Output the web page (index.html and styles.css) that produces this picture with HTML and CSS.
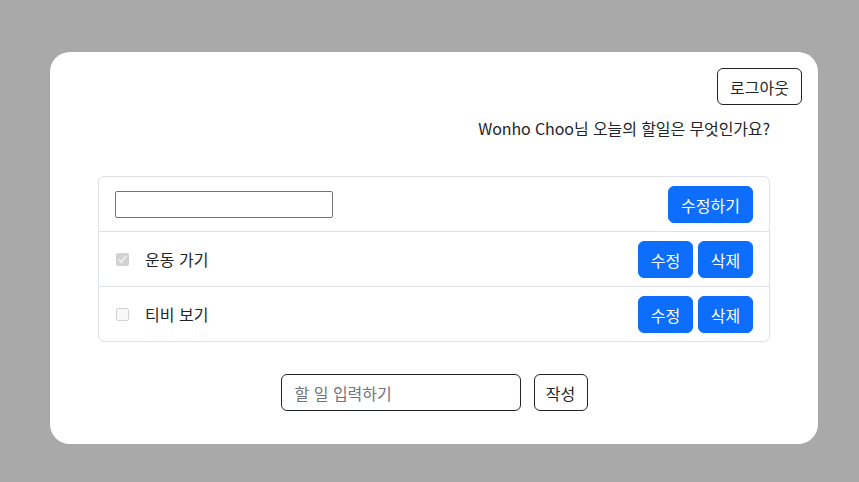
FILE: index.html
```html
<!DOCTYPE html>
<html lang="ko">
<head>
<meta charset="utf-8">
<link rel="stylesheet" href="styles.css">
</head>
<body>
<div class="card">
  <div class="top">
    <button class="btn btn-outline">로그아웃</button>
  </div>
  <div class="content">
    <p class="greeting">Wonho Choo님 오늘의 할일은 무엇인가요?</p>
    <ul class="list">
      <li class="item">
        <input class="edit-input" type="text">
        <button class="btn btn-primary">수정하기</button>
      </li>
      <li class="item">
        <label class="todo"><input type="checkbox" checked disabled><span>운동 가기</span></label>
        <div class="actions">
          <button class="btn btn-primary">수정</button>
          <button class="btn btn-primary">삭제</button>
        </div>
      </li>
      <li class="item">
        <label class="todo"><input type="checkbox" disabled><span>티비 보기</span></label>
        <div class="actions">
          <button class="btn btn-primary">수정</button>
          <button class="btn btn-primary">삭제</button>
        </div>
      </li>
    </ul>
    <form class="add-form">
      <input class="add-input" type="text" placeholder="할 일 입력하기">
      <button type="button" class="btn btn-outline btn-write">작성</button>
    </form>
  </div>
</div>
</body>
</html>
```
FILE: styles.css
```css
* { box-sizing: border-box; }
html, body { margin: 0; padding: 0; }
body {
  background: #a9a9a9;
  font-family: "Noto Sans CJK KR", "Noto Sans", sans-serif;
  font-size: 16px;
  color: #212529;
  height: 482px;
  overflow: hidden;
  padding-top: 52px;
}
.card {
  margin-left: 50px;
  width: 768px;
  height: 392px;
  background: #fff;
  border-radius: 20px;
  padding: 16px 16px 32px 16px;
}
.top {
  display: flex;
  justify-content: flex-end;
}
.btn {
  font-family: inherit;
  font-size: 16px;
  line-height: 24px;
  padding: 6px 12px;
  border-radius: 6px;
  cursor: pointer;
  height: 37px;
}
.btn-outline {
  background: #fff;
  border: 1px solid #212529;
  color: #212529;
}
.btn-primary {
  background: #0d6efd;
  border: 1px solid #0d6efd;
  color: #fff;
}
.content {
  padding: 0 32px;
}
.greeting {
  margin: 10px 0 0 0;
  text-align: right;
  line-height: 26px;
  letter-spacing: -0.1px;
}
.list {
  list-style: none;
  margin: 35px 0 0 0;
  padding: 0;
  border: 1px solid #dee2e6;
  border-radius: 6px;
}
.item {
  display: flex;
  align-items: center;
  justify-content: space-between;
  height: 55px;
  padding: 0 16px;
  border-top: 1px solid #dee2e6;
}
.item:first-child { border-top: none; height: 54px; }
.edit-input {
  width: 218px;
  height: 27px;
  border: 1px solid #767676;
  border-radius: 2px;
  padding: 1px 2px;
  font-family: inherit;
  font-size: 13px;
  margin-top: 0;
}
.todo {
  display: flex;
  align-items: center;
}
.todo input {
  margin: 0 0 0 1px;
  width: 13px;
  height: 13px;
}
.todo span {
  margin-left: 16px;
  line-height: 24px;
}
.actions {
  display: flex;
  gap: 5px;
}
.actions .btn { width: 55px; padding: 6px 0; }
.add-form {
  display: flex;
  justify-content: center;
  gap: 13px;
  margin-top: 32px;
}
.add-input {
  width: 240px;
  height: 37px;
  border: 1px solid #212529;
  border-radius: 6px;
  padding: 6px 13px;
  font-family: inherit;
  font-size: 16px;
  color: #212529;
}
.add-input::placeholder { color: #6c757d; }
.btn-write { width: 54px; padding: 6px 0; }
```
